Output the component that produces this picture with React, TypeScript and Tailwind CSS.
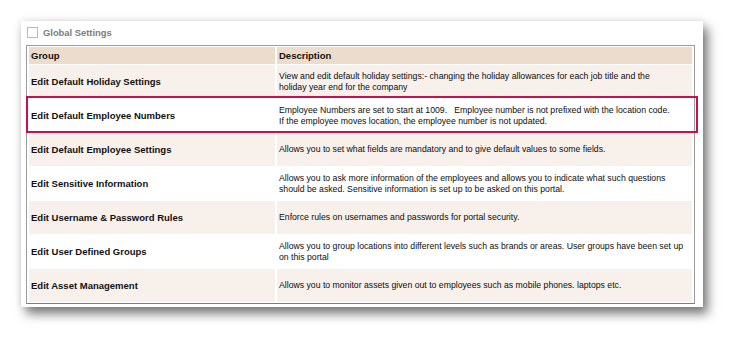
import React from "react";

const rows = [
  {
    group: "Edit Default Holiday Settings",
    desc: ["View and edit default holiday settings:- changing the holiday allowances for each job title and the", "holiday year end for the company"],
  },
  {
    group: "Edit Default Employee Numbers",
    desc: [
      "Employee Numbers are set to start at 1009.\u00a0\u00a0 Employee number is not prefixed with the location code.",
      "If the employee moves location, the employee number is not updated.",
    ],
  },
  {
    group: "Edit Default Employee Settings",
    desc: ["Allows you to set what fields are mandatory and to give default values to some fields."],
  },
  {
    group: "Edit Sensitive Information",
    desc: [
      "Allows you to ask more information of the employees and allows you to indicate what such questions",
      "should be asked. Sensitive information is set up to be asked on this portal.",
    ],
  },
  {
    group: "Edit Username & Password Rules",
    desc: ["Enforce rules on usernames and passwords for portal security."],
  },
  {
    group: "Edit User Defined Groups",
    desc: ["Allows you to group locations into different levels such as brands or areas. User groups have been set up", "on this portal"],
  },
  {
    group: "Edit Asset Management",
    desc: ["Allows you to monitor assets given out to employees such as mobile phones. laptops etc."],
  },
];

export default function App() {
  return (
    <div className="w-[745px] h-[350px] bg-white overflow-hidden pt-[21px] pl-[21px] font-['Liberation_Sans',Arial,sans-serif] text-[#111]">
      {/* Settings panel */}
      <div className="relative w-[682px] h-[286px] bg-white pt-[6px] px-[5px] shadow-[5px_7px_10px_rgba(0,0,0,0.5),0_0_8px_rgba(0,0,0,0.12)]">
        <div className="flex items-center gap-[5px] pl-[1px] h-[11px]">
          <span className="w-[11px] h-[11px] border-[1.5px] border-[#e2b07e] bg-white"></span>
          <span className="text-[9.4px] font-bold text-[#7b7b7b] leading-none">Global Settings</span>
        </div>

        <table className="mt-[7px] w-[669px] border border-[#9c9c9c] border-b-[#7d7d7d] border-separate border-spacing-x-[2px] border-spacing-y-[1px]">
          <thead>
            <tr className="h-[17px] bg-[#ecdccb]">
              <th className="w-[246px] text-left pl-[2px] text-[9.5px] font-bold leading-none">Group</th>
              <th className="text-left pl-[2px] text-[9.5px] font-bold leading-none">Description</th>
            </tr>
          </thead>
          <tbody>
            {rows.map((row, i) => (
              <tr key={i} className={`h-[33px] ${i % 2 === 0 ? "bg-[#f8f0ea]" : "bg-white"}`}>
                <td className="pl-[2px] text-[9.5px] font-bold leading-none align-middle">{row.group}</td>
                <td className="pl-[2px] text-[8.7px] leading-[11px] align-middle whitespace-nowrap text-[#0d0d0d]">
                  {row.desc.map((line, j) => (
                    <div key={j}>{line}</div>
                  ))}
                </td>
              </tr>
            ))}
          </tbody>
        </table>

        {/* highlight annotation */}
        <div className="absolute left-[5px] top-[75px] w-[672px] h-[37px] border-2 border-[#c5114f]"></div>
      </div>
    </div>
  );
}
